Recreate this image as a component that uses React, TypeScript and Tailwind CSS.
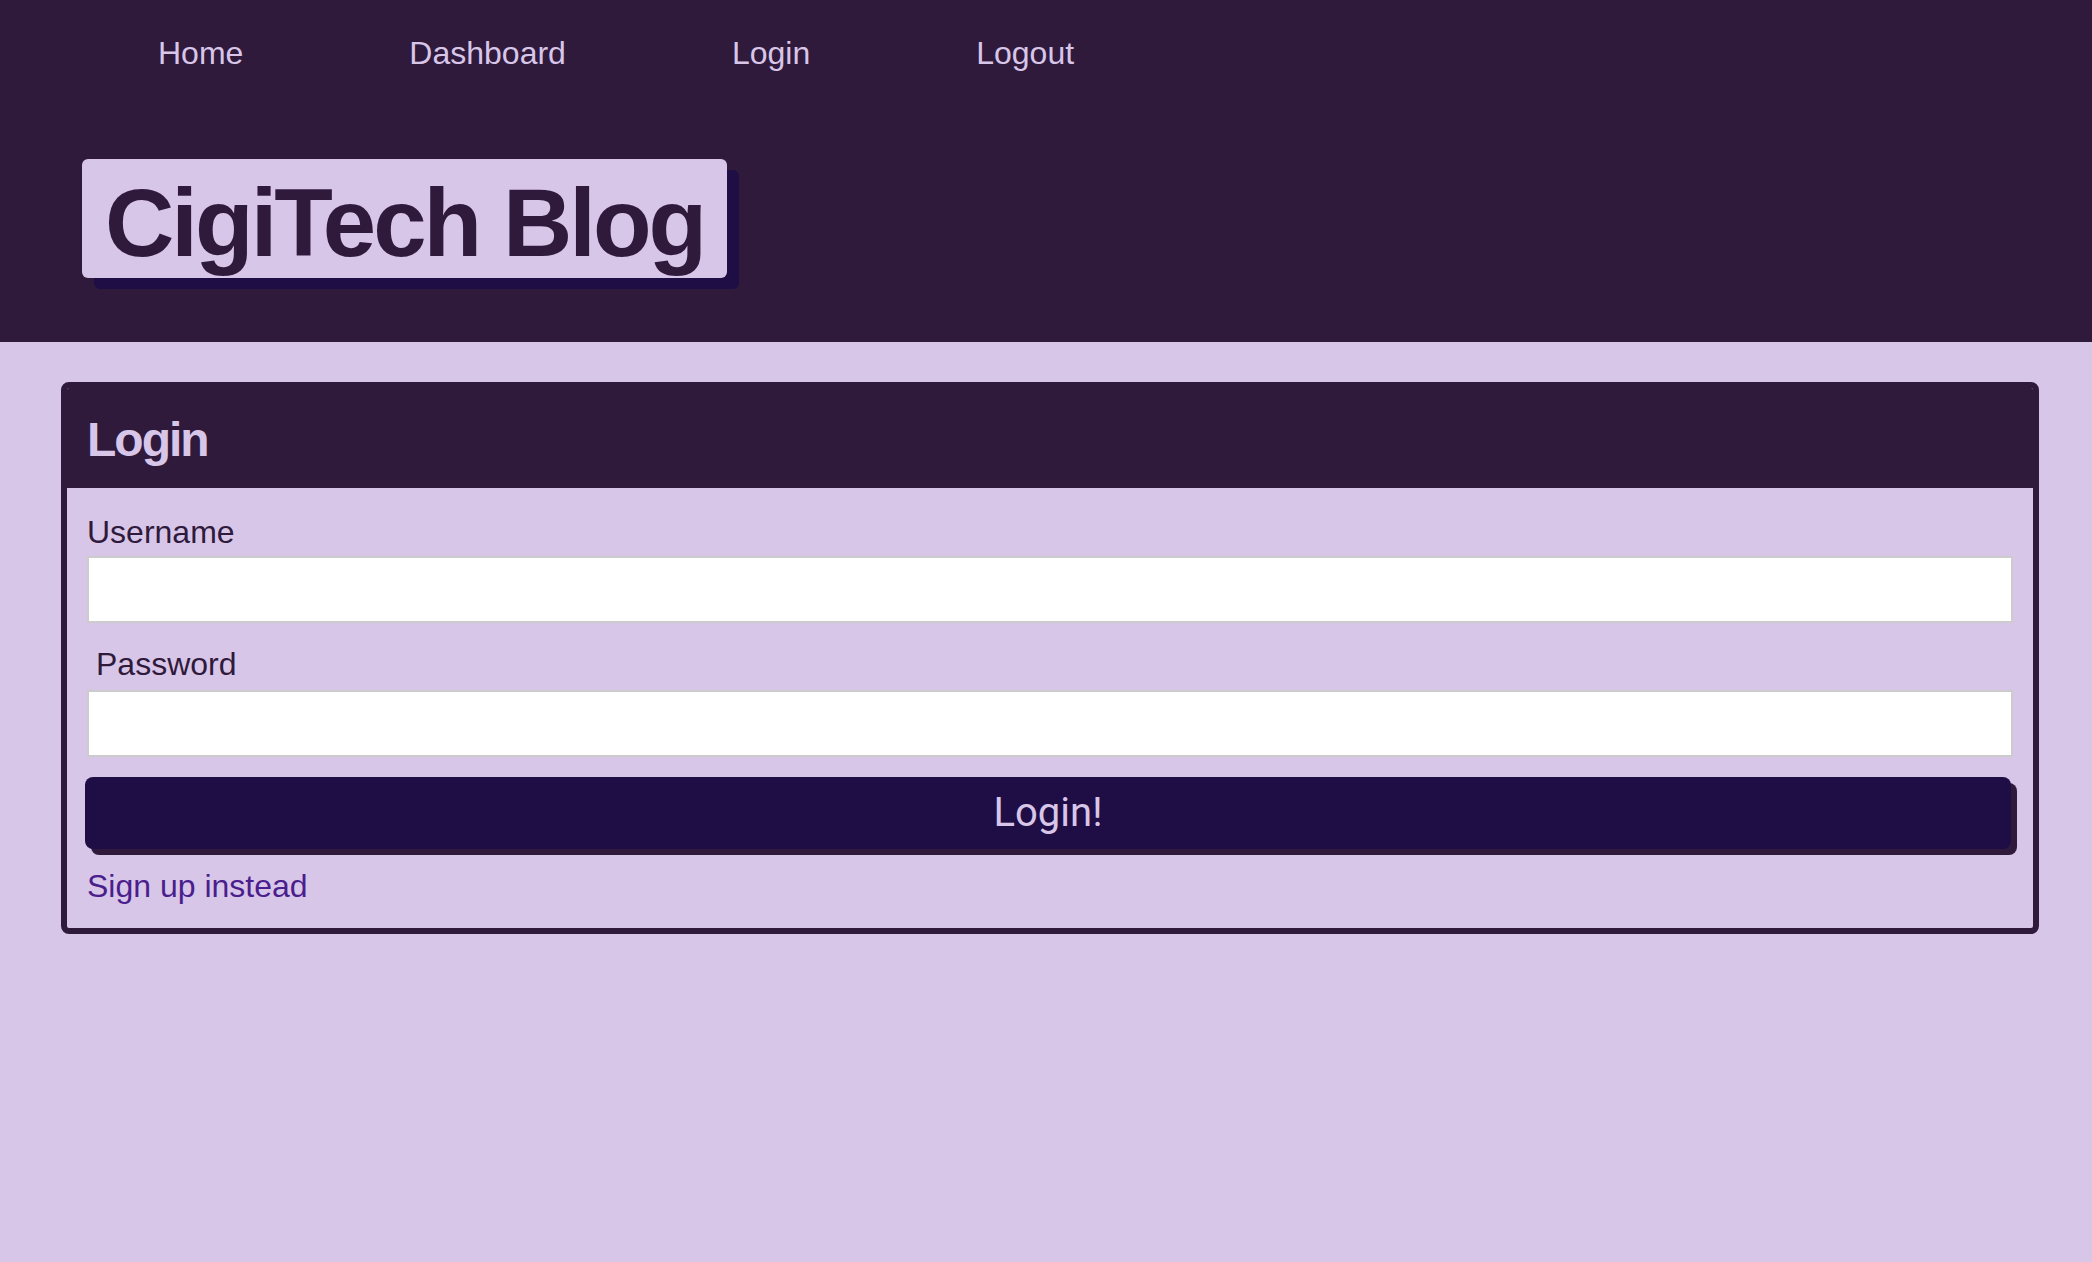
import React from "react";

const navLinks = ["Home", "Dashboard", "Login", "Logout"];

function Header() {
  return (
    <header className="bg-[#2f1a3c] h-[342px]">
      <nav className="flex gap-[166px] pl-[158px] pt-[33px]">
        {navLinks.map((label) => (
          <a
            key={label}
            href="#"
            className="text-[32px] leading-[40px] text-[#d8c6e9]"
          >
            {label}
          </a>
        ))}
      </nav>
      <div className="mt-[86px] ml-[82px]">
        <h1 className="inline-block bg-[#d8c6e9] text-[#2f1a3c] rounded-md shadow-[12px_11px_0_#1e0e45] px-[23px] pt-[16px] pb-[7px] text-[96px] leading-none font-bold tracking-[-3px]">
          CigiTech Blog
        </h1>
      </div>
    </header>
  );
}

function LoginCard() {
  return (
    <section className="ml-[61px] mr-[53px] mt-[40px] border-[6px] border-[#2f1a3c] rounded-lg overflow-hidden bg-[#d8c6e9]">
      <div className="bg-[#2f1a3c] px-[20px] pt-[28px] pb-[24px]">
        <h2 className="text-[48px] leading-none font-bold text-[#d8c6e9] tracking-[-2px]">
          Login
        </h2>
      </div>
      <form className="px-[20px] pt-[24px] pb-[22px] flex flex-col">
        <label className="text-[32px] leading-[40px] text-[#2f1a3c]">
          Username
        </label>
        <input
          type="text"
          className="mt-[4px] h-[67px] bg-white border-2 border-[#cccccc] outline-none"
        />
        <label className="mt-[21px] pl-[9px] text-[32px] leading-[40px] text-[#2f1a3c]">
          Password
        </label>
        <input
          type="password"
          className="mt-[6px] h-[67px] bg-white border-2 border-[#cccccc] outline-none"
        />
        <button
          type="button"
          className="mt-[20px] ml-[-2px] mr-[2px] h-[72px] rounded-lg bg-[#1f0e45] shadow-[6px_6px_0_#2f1a3c] text-[40px] text-[#d8c6e9] font-['Roboto','Liberation_Sans',sans-serif]"
        >
          Login!
        </button>
        <a
          href="#"
          className="mt-[17px] text-[32px] leading-[40px] text-[#4a1e8c] self-start"
        >
          Sign up instead
        </a>
      </form>
    </section>
  );
}

export default function App() {
  return (
    <div className="min-h-screen bg-[#d8c6e9] font-['Liberation_Sans',Arial,sans-serif]">
      <Header />
      <LoginCard />
    </div>
  );
}
